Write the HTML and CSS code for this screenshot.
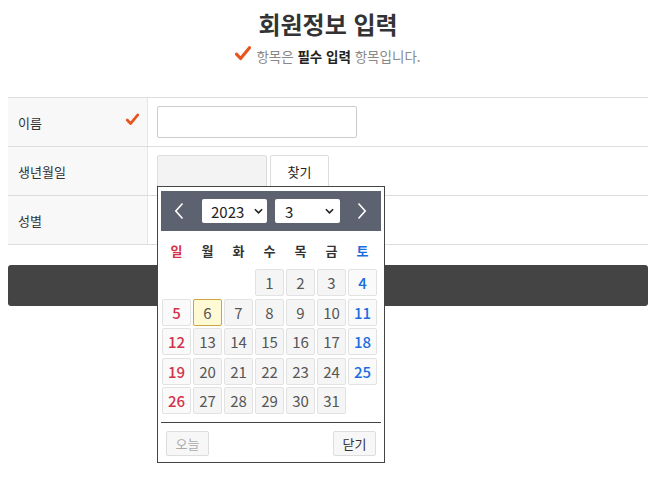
FILE: index.html
```html
<!DOCTYPE html>
<html lang="ko">
<head>
<meta charset="utf-8">
<title>회원정보 입력</title>
<link rel="stylesheet" href="styles.css">
</head>
<body>
<div class="page">
  <h1 class="title">회원정보 입력</h1>
  <p class="subtitle">
    <svg class="check big" viewBox="0 0 16 15" width="16" height="15"><path d="M1.5 8.2 L5.6 12.5 L14.5 1.8" fill="none" stroke="#e8541e" stroke-width="3.2" stroke-linecap="round" stroke-linejoin="round"/></svg>
    <span>항목은 <b>필수 입력</b> 항목입니다.</span>
  </p>

  <div class="form">
    <div class="row">
      <div class="label">이름
        <svg class="check" viewBox="0 0 16 15" width="13" height="13"><path d="M1.5 8.2 L5.6 12.5 L14.5 1.8" fill="none" stroke="#e8541e" stroke-width="3.4" stroke-linecap="round" stroke-linejoin="round"/></svg>
      </div>
      <div class="field"><input class="input name" type="text"></div>
    </div>
    <div class="row">
      <div class="label">생년월일</div>
      <div class="field"><input class="input birth" type="text" readonly><button class="btn find">찾기</button></div>
    </div>
    <div class="row">
      <div class="label">성별</div>
      <div class="field"></div>
    </div>
  </div>

  <button class="submit"></button>

  <div class="calendar">
    <div class="cal-head">
      <svg class="arrow" viewBox="0 0 10 18" width="10" height="18"><path d="M8.5 1.5 L1.8 9 L8.5 16.5" fill="none" stroke="#fff" stroke-width="1.6"/></svg>
      <div class="sel year"><span>2023</span><svg viewBox="0 0 10 6" width="9" height="6"><path d="M1 1 L5 5 L9 1" fill="none" stroke="#222" stroke-width="1.8"/></svg></div>
      <div class="sel month"><span>3</span><svg viewBox="0 0 10 6" width="9" height="6"><path d="M1 1 L5 5 L9 1" fill="none" stroke="#222" stroke-width="1.8"/></svg></div>
      <svg class="arrow" viewBox="0 0 10 18" width="10" height="18"><path d="M1.5 1.5 L8.2 9 L1.5 16.5" fill="none" stroke="#fff" stroke-width="1.6"/></svg>
    </div>
    <div class="grid wk">
      <div class="sun">일</div><div>월</div><div>화</div><div>수</div><div>목</div><div>금</div><div class="sat">토</div>
    </div>
    <div class="grid days">
      <div class="blank"></div><div class="blank"></div><div class="blank"></div>
      <div class="d">1</div><div class="d">2</div><div class="d">3</div><div class="d sat">4</div>
      <div class="d sun">5</div><div class="d today">6</div><div class="d">7</div><div class="d">8</div><div class="d">9</div><div class="d">10</div><div class="d sat">11</div>
      <div class="d sun">12</div><div class="d">13</div><div class="d">14</div><div class="d">15</div><div class="d">16</div><div class="d">17</div><div class="d sat">18</div>
      <div class="d sun">19</div><div class="d">20</div><div class="d">21</div><div class="d">22</div><div class="d">23</div><div class="d">24</div><div class="d sat">25</div>
      <div class="d sun">26</div><div class="d">27</div><div class="d">28</div><div class="d">29</div><div class="d">30</div><div class="d">31</div>
    </div>
    <div class="cal-foot">
      <button class="cbtn off">오늘</button>
      <button class="cbtn">닫기</button>
    </div>
  </div>
</div>
</body>
</html>
```
FILE: styles.css
```css
* { box-sizing: border-box; }
html, body { margin: 0; padding: 0; background: #fff; }
body {
  min-height: 490px;
  font-family: "Noto Sans CJK KR", "Noto Sans", sans-serif;
  color: #333;
}
.page { position: relative; padding: 0 6px 0 8px; min-height: 490px; }

.title {
  margin: 0;
  padding-top: 8px;
  font-size: 24px;
  line-height: 32px;
  font-weight: 700;
  text-align: center;
  color: #333;
}
.subtitle {
  margin: 5px 0 0;
  height: 22px;
  display: flex;
  justify-content: center;
  align-items: center;
  gap: 5px;
  font-size: 13.5px;
  color: #888;
}
.subtitle b { color: #222; font-weight: 700; }
.check.big { margin-top: -6px; }

.form {
  margin-top: 30px;
  border-top: 1px solid #ddd;
}
.row {
  display: flex;
  height: 49px;
  border-bottom: 1px solid #ddd;
}
.label {
  width: 140px;
  background: #f8f8f8;
  border-right: 1px solid #e5e5e5;
  display: flex;
  align-items: center;
  justify-content: space-between;
  padding: 0 8px 0 10px;
  font-size: 13px;
  color: #333;
}
.label .check { margin-top: -6px; }
.field {
  flex: 1;
  display: flex;
  align-items: center;
  padding-left: 9px;
  gap: 3px;
}
.input {
  height: 32px;
  border: 1px solid #ccc;
  border-radius: 2px;
  font: inherit;
  background: #fff;
}
.input.name { width: 200px; }
.input.birth { width: 110px; background: #f3f3f3; border-color: #ddd; }
.btn.find {
  height: 32px;
  width: 59px;
  border: 1px solid #ddd;
  border-radius: 2px;
  background: #fff;
  font-family: inherit;
  font-size: 13px;
  color: #222;
}

.submit {
  display: block;
  width: 100%;
  height: 41px;
  margin-top: 20px;
  border: 0;
  border-radius: 3px;
  background: #444;
  color: #fff;
  font-family: inherit;
  font-size: 14px;
}

.calendar {
  position: absolute;
  left: 157px;
  top: 186px;
  width: 228px;
  border: 1px solid #444;
  background: #fff;
  padding: 4px 3px 6px;
  z-index: 2;
}
.cal-head {
  height: 40px;
  background: #5d6270;
  display: flex;
  align-items: center;
  padding: 0 14px 0 13px;
}
.arrow { flex: none; }
.cal-head .arrow:first-child { margin-right: 18px; }
.cal-head .arrow:last-child { margin-left: auto; }
.sel {
  height: 24px;
  background: #fff;
  border-radius: 2px;
  display: flex;
  align-items: center;
  justify-content: space-between;
  padding: 0 4px 0 9px;
  font-size: 15px;
  color: #222;
}
.sel.year { width: 65px; margin-right: 8px; }
.sel.month { width: 65px; padding-left: 10px; padding-right: 6px; }

.grid {
  display: grid;
  grid-template-columns: repeat(7, 29px);
  column-gap: 2px;
  padding-left: 1px;
}
.wk {
  height: 38px;
  align-items: center;
  font-size: 13px;
  font-weight: 700;
  color: #333;
}
.wk div { text-align: center; }
.days {
  grid-auto-rows: 27px;
  row-gap: 2.5px;
}
.d {
  border: 1px solid #e2e2e2;
  border-radius: 2px;
  background: #f5f5f5;
  display: flex;
  align-items: center;
  justify-content: center;
  font-size: 15px;
  color: #555;
}
.sun { color: #d3324a; }
.sat { color: #1b6de0; }
.d.sun, .d.sat { background: #fafafa; font-weight: 500; }
.d.today { background: #fff9d4; border-color: #c9a640; }

.cal-foot {
  margin-top: 8px;
  border-top: 1px solid #444;
  padding: 8px 5px 0 5px;
  display: flex;
  justify-content: space-between;
}
.cbtn {
  width: 43px;
  height: 25px;
  border: 1px solid #ddd;
  border-radius: 2px;
  background: #f7f7f7;
  font-family: inherit;
  font-size: 13px;
  color: #333;
  padding: 0;
}
.cbtn.off { color: #aaa; }
```
